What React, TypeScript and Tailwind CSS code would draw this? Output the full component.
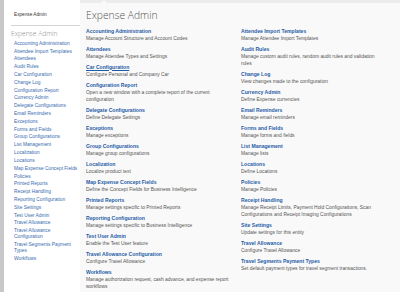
import React from 'react';

type Item = { title: string; desc: string; hover?: boolean };

const sideLinks = [
    'Accounting Administration',
    'Attendee Import Templates',
    'Attendees',
    'Audit Rules',
    'Car Configuration',
    'Change Log',
    'Configuration Report',
    'Currency Admin',
    'Delegate Configurations',
    'Email Reminders',
    'Exceptions',
    'Forms and Fields',
    'Group Configurations',
    'List Management',
    'Localization',
    'Locations',
    'Map Expense Concept Fields',
    'Policies',
    'Printed Reports',
    'Receipt Handling',
    'Reporting Configuration',
    'Site Settings',
    'Test User Admin',
    'Travel Allowance',
    'Travel Allowance Configuration',
    'Travel Segments Payment Types',
    'Workflows',
];

const leftColumn: Item[] = [
    { title: 'Accounting Administration', desc: 'Manage Account Structure and Account Codes' },
    { title: 'Attendees', desc: 'Manage Attendee Types and Settings' },
    { title: 'Car Configuration', desc: 'Configure Personal and Company Car', hover: true },
    { title: 'Configuration Report', desc: 'Open a new window with a complete report of the current configuration' },
    { title: 'Delegate Configurations', desc: 'Define Delegate Settings' },
    { title: 'Exceptions', desc: 'Manage exceptions' },
    { title: 'Group Configurations', desc: 'Manage group configurations' },
    { title: 'Localization', desc: 'Localize product text' },
    { title: 'Map Expense Concept Fields', desc: 'Define the Concept Fields for Business Intelligence' },
    { title: 'Printed Reports', desc: 'Manage settings specific to Printed Reports' },
    { title: 'Reporting Configuration', desc: 'Manage settings specific to Business Intelligence' },
    { title: 'Test User Admin', desc: 'Enable the Test User feature' },
    { title: 'Travel Allowance Configuration', desc: 'Configure Travel Allowance' },
    { title: 'Workflows', desc: 'Manage authorization request, cash advance, and expense report workflows' },
];

const rightColumn: Item[] = [
    { title: 'Attendee Import Templates', desc: 'Manage Attendee Import Templates' },
    { title: 'Audit Rules', desc: 'Manage custom audit rules, random audit rules and validation rules' },
    { title: 'Change Log', desc: 'View changes made to the configuration' },
    { title: 'Currency Admin', desc: 'Define Expense currencies' },
    { title: 'Email Reminders', desc: 'Manage email reminders' },
    { title: 'Forms and Fields', desc: 'Manage forms and fields' },
    { title: 'List Management', desc: 'Manage lists' },
    { title: 'Locations', desc: 'Define Locations' },
    { title: 'Policies', desc: 'Manage Policies' },
    {
        title: 'Receipt Handling',
        desc: 'Manage Receipt Limits, Payment Hold Configurations, Scan Configurations and Receipt Imaging Configurations',
    },
    { title: 'Site Settings', desc: 'Update settings for this entity' },
    { title: 'Travel Allowance', desc: 'Configure Travel Allowance' },
    { title: 'Travel Segments Payment Types', desc: 'Set default payment types for travel segment transactions.' },
];

const AdminItem: React.FC<{ item: Item }> = ({ item }) => (
    <div className="flex flex-col">
        <a
            href="#"
            className={`text-[5.1px] leading-[7px] font-bold text-[#1f5ca6] ${item.hover ? 'underline' : ''}`}
        >
            {item.title}
        </a>
        <p className="text-[4.9px] leading-[7px] text-[#555555]">{item.desc}</p>
    </div>
);

const App: React.FC = () => {
    return (
        <div className="flex w-[400px] h-[292px] overflow-hidden bg-[#f9f9f9] font-['Liberation_Sans',Arial,sans-serif]">
            {/* gray rail */}
            <div className="w-[4px] shrink-0 bg-[#c8c8c8]" />

            {/* Sidebar */}
            <aside className="w-[76px] shrink-0 bg-white flex flex-col pl-[7px]">
                <div className="pt-[12px] pl-[3px] text-[4.7px] leading-[5px] text-[#333333]">Expense Admin</div>
                <div className="mt-[8px] h-px bg-[#d4d4d4]" />
                <h2 className="mt-[3.7px] text-[6.7px] leading-[8px] font-light text-[#8a8a8a] font-['Open_Sans',sans-serif]">
                    Expense Admin
                </h2>
                <nav className="mt-[2.1px] pl-[3px] w-[68px] flex flex-col">
                    {sideLinks.map((label) => (
                        <a key={label} href="#" className="py-[0.92px] text-[4.85px] leading-[6px] text-[#3a6cb0]">
                            {label}
                        </a>
                    ))}
                </nav>
            </aside>

            {/* Main Content */}
            <main className="flex-1 flex flex-col">
                <div className="h-[3px] bg-[#ececec] flex">
                    <svg className="ml-[21px]" width="6" height="3" viewBox="0 0 6 3">
                        <path d="M0 3 L3 0 L6 3 Z" fill="#f9f9f9" />
                    </svg>
                </div>
                <h1 className="mt-[6px] pl-[6px] text-[10.3px] leading-[12px] font-light text-[#555555] font-['Open_Sans',sans-serif]">
                    Expense Admin
                </h1>
                <div className="mt-[6.5px] pl-[6px] flex gap-[12px]">
                    <div className="w-[143px] flex flex-col gap-[4px]">
                        {leftColumn.map((item) => (
                            <AdminItem key={item.title} item={item} />
                        ))}
                    </div>
                    <div className="w-[140px] flex flex-col gap-[4px]">
                        {rightColumn.map((item) => (
                            <AdminItem key={item.title} item={item} />
                        ))}
                    </div>
                </div>
            </main>
        </div>
    );
};

export default App;
